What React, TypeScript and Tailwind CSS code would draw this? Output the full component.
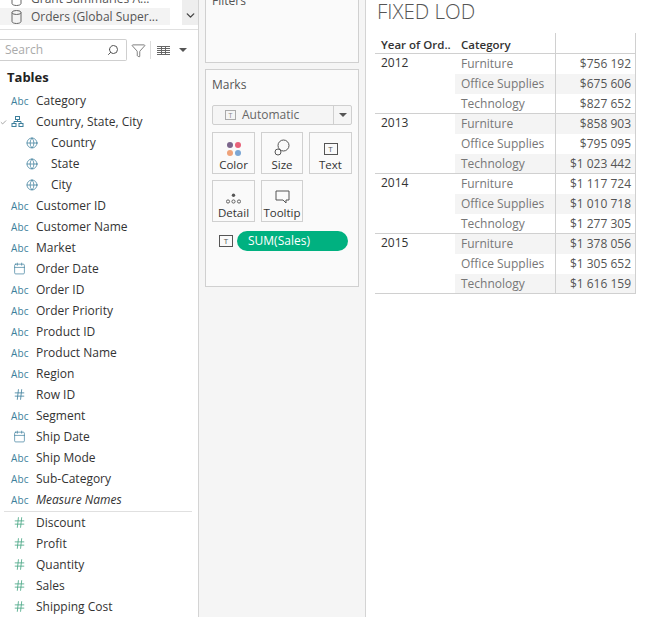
import { Filter, Search, ChevronDown, Calendar, Globe, Hash, Check } from "lucide-react";

const font = "font-['Open_Sans',sans-serif]";

type Kind = "abc" | "date" | "num" | "measure" | "geo" | "tree";

const dimensions: { name: string; kind: Kind; italic?: boolean }[] = [
  { name: "Customer ID", kind: "abc" },
  { name: "Customer Name", kind: "abc" },
  { name: "Market", kind: "abc" },
  { name: "Order Date", kind: "date" },
  { name: "Order ID", kind: "abc" },
  { name: "Order Priority", kind: "abc" },
  { name: "Product ID", kind: "abc" },
  { name: "Product Name", kind: "abc" },
  { name: "Region", kind: "abc" },
  { name: "Row ID", kind: "num" },
  { name: "Segment", kind: "abc" },
  { name: "Ship Date", kind: "date" },
  { name: "Ship Mode", kind: "abc" },
  { name: "Sub-Category", kind: "abc" },
  { name: "Measure Names", kind: "abc", italic: true },
];

const measures = ["Discount", "Profit", "Quantity", "Sales", "Shipping Cost"];

const years = [
  { year: "2012", values: ["$756 192", "$675 606", "$827 652"] },
  { year: "2013", values: ["$858 903", "$795 095", "$1 023 442"] },
  { year: "2014", values: ["$1 117 724", "$1 010 718", "$1 277 305"] },
  { year: "2015", values: ["$1 378 056", "$1 305 652", "$1 616 159"] },
];

const categories = ["Furniture", "Office Supplies", "Technology"];

function HierarchyIcon() {
  return (
    <svg width="13" height="13" viewBox="0 0 13 13" fill="none" stroke="#3d7f9c" strokeWidth="1">
      <rect x="4.5" y="1.5" width="4" height="3" />
      <rect x="1" y="8.5" width="4" height="3" />
      <rect x="8" y="8.5" width="4" height="3" />
      <path d="M6.5 4.5v2M3 8.5v-2h7v2" />
    </svg>
  );
}

function CylinderIcon() {
  return (
    <svg width="11" height="14" viewBox="0 0 11 14" fill="none" stroke="#666" strokeWidth="1" className="mr-[9px] shrink-0">
      <ellipse cx="5.5" cy="2.5" rx="4.5" ry="2" />
      <path d="M1 2.5v9c0 1.1 2 2 4.5 2s4.5-.9 4.5-2v-9" />
    </svg>
  );
}

function FieldIcon({ kind }: { kind: Kind }) {
  if (kind === "abc") return <span className="text-[10px] leading-none tracking-[0.2px] text-[#3d7f9c]">Abc</span>;
  if (kind === "date") return <Calendar size={13} color="#3d7f9c" strokeWidth={1.3} className="ml-[2px]" />;
  if (kind === "num") return <Hash size={13} color="#3d7f9c" strokeWidth={1.5} className="ml-[2px]" />;
  if (kind === "measure") return <Hash size={13} color="#45a583" strokeWidth={1.5} className="ml-[2px]" />;
  if (kind === "geo") return <Globe size={12} color="#3d7f9c" strokeWidth={1.5} />;
  return <HierarchyIcon />;
}

function FieldRow({ name, kind, italic }: { name: string; kind: Kind; italic?: boolean }) {
  return (
    <div className="flex h-[21px] items-center pl-[11px]">
      <span className="flex w-[25px] shrink-0 items-center">
        <FieldIcon kind={kind} />
      </span>
      <span className={`text-[12px] text-[#333] ${italic ? "italic" : ""}`}>{name}</span>
    </div>
  );
}

function TIcon({ className }: { className?: string }) {
  return (
    <span className={`flex h-[12px] w-[14px] items-center justify-center border border-[#555] text-[8px] leading-none text-[#555] ${className ?? ""}`}>
      T
    </span>
  );
}

function MarkButton({ label, children }: { label: string; children: React.ReactNode }) {
  return (
    <div className="flex h-[42px] w-full flex-col items-center border border-[#d0d0d0]">
      <div className="flex h-[24px] items-end justify-center">{children}</div>
      <span className="mt-[1px] text-[11.5px] leading-[16px] text-[#333]">{label}</span>
    </div>
  );
}

export default function App() {
  return (
    <div className={`flex h-[617px] w-[649px] overflow-hidden bg-white ${font}`}>
      {/* data pane */}
      <div className="w-[199px] shrink-0 overflow-hidden border-r border-[#d4d4d4]">
        <div className="flex h-[30px] items-start border-b border-[#e0e0e0]">
          <div className="w-[170px]">
            <div className="-mt-[10px] flex h-[18px] items-center pl-[11px] text-[12px] text-[#555]">
              <CylinderIcon />
              Grant Summaries A...
            </div>
            <div className="flex h-[17px] items-center bg-[#f3f3f3] pl-[11px] text-[12px] text-[#555]">
              <CylinderIcon />
              Orders (Global Super...
            </div>
          </div>
          <div className="ml-[12px] flex h-[25px] w-[16px] items-end justify-center bg-[#eeeeee] pb-[3px]">
            <ChevronDown size={13} color="#444" strokeWidth={2.5} />
          </div>
        </div>
        <div className="mt-[9px] flex h-[22px] items-center">
          <div className="flex h-[22px] w-[127px] items-center justify-between rounded-r-[2px] border border-l-0 border-[#cfcfcf] pl-[5px] pr-[7px] text-[12px] text-[#aaa]">
            Search
            <Search size={12} color="#555" className="-scale-x-100" />
          </div>
          <Filter size={15} color="#555" strokeWidth={1.2} className="ml-[4px]" />
          <div className="ml-[4px] h-[18px] w-px bg-[#ddd]" />
          <svg width="13" height="9" viewBox="0 0 13 9" fill="none" stroke="#666" strokeWidth="1" className="ml-[6px]">
            <path d="M0 .5h13M0 2.5h13M0 4.5h13M0 6.5h13M0 8.5h13M4.5 0v9M8.5 0v9" />
          </svg>
          <span className="ml-[9px] h-0 w-0 border-x-[4px] border-t-[4px] border-x-transparent border-t-[#555]" />
        </div>
        <div className="mt-[7px] pl-[7px] text-[13px] font-bold leading-[18px] text-[#222]">Tables</div>
        <div className="mt-[4px]">
          <FieldRow name="Category" kind="abc" />
          <div className="relative">
            <Check size={7} color="#666" className="absolute left-0 top-[8px]" />
            <FieldRow name="Country, State, City" kind="tree" />
          </div>
          <div className="pl-[15px]">
            {["Country", "State", "City"].map((n) => (
              <FieldRow key={n} name={n} kind="geo" />
            ))}
          </div>
          {dimensions.map((f) => (
            <FieldRow key={f.name} name={f.name} kind={f.kind} italic={f.italic} />
          ))}
        </div>
        <div className="mx-[4px] mt-[1px] h-px w-[188px] bg-[#e0e0e0]" />
        {measures.map((n) => (
          <FieldRow key={n} name={n} kind="measure" />
        ))}
      </div>

      {/* shelves */}
      <div className="w-[167px] shrink-0 border-r border-[#d4d4d4] bg-[#f5f5f5] pl-[6px]">
        <div className="-mt-[8px] h-[71px] w-[154px] border border-[#d0d0d0] bg-[#fafafa] px-[6px] text-[12px] leading-[16px] text-[#555]">
          Filters
        </div>
        <div className="mt-[6px] h-[218px] w-[154px] border border-[#d0d0d0] bg-[#fafafa] px-[6px]">
          <div className="mt-[7px] text-[12px] leading-[16px] text-[#555]">Marks</div>
          <div className="mt-[12px] flex h-[20px] w-[140px] items-center rounded-[2px] border border-[#cfcfcf] bg-[#f5f5f5]">
            <div className="flex flex-1 items-center pl-[12px] text-[12px] text-[#666]">
              <TIcon className="mr-[6px] !h-[10px] !w-[11px] border-[#aaa] !text-[7px] text-[#888]" />
              Automatic
            </div>
            <div className="flex h-full w-[18px] items-center justify-center border-l border-[#cfcfcf]">
              <span className="h-0 w-0 border-x-[4px] border-t-[4px] border-x-transparent border-t-[#555]" />
            </div>
          </div>
          <div className="mt-[7px] grid grid-cols-[43px_42px_43px] gap-x-[6px] gap-y-[6px]">
            <MarkButton label="Color">
              <span className="grid grid-cols-2 gap-[2px]">
                <span className="h-[6px] w-[6px] rounded-full bg-[#7b668c]" />
                <span className="h-[6px] w-[6px] rounded-full bg-[#e8627a]" />
                <span className="h-[6px] w-[6px] rounded-full bg-[#eea27a]" />
                <span className="h-[6px] w-[6px] rounded-full bg-[#7ba6d4]" />
              </span>
            </MarkButton>
            <MarkButton label="Size">
              <svg width="16" height="17" viewBox="0 0 16 17" fill="none" stroke="#555" strokeWidth="1">
                <circle cx="9.5" cy="6.5" r="5.5" />
                <circle cx="4" cy="13" r="3" fill="#fafafa" />
              </svg>
            </MarkButton>
            <MarkButton label="Text">
              <TIcon className="mb-[1px]" />
            </MarkButton>
            <MarkButton label="Detail">
              <svg width="15" height="11" viewBox="0 0 15 11" fill="none" stroke="#555" strokeWidth="0.9">
                <circle cx="7.5" cy="2.2" r="1.7" fill="#555" stroke="none" />
                <circle cx="2" cy="8.5" r="1.6" />
                <circle cx="7.5" cy="8.5" r="1.6" />
                <circle cx="13" cy="8.5" r="1.6" />
              </svg>
            </MarkButton>
            <MarkButton label="Tooltip">
              <svg width="15" height="14" viewBox="0 0 15 14" fill="none" stroke="#555" strokeWidth="1">
                <path d="M1 1h13v9h-3v3l-3-3H1z" />
              </svg>
            </MarkButton>
          </div>
          <div className="mt-[9px] flex items-center pl-[7px]">
            <TIcon />
            <div className="ml-[4px] flex h-[20px] w-[111px] items-center rounded-full bg-[#00b180] pl-[11px] text-[12px] text-white">
              SUM(Sales)
            </div>
          </div>
        </div>
      </div>

      {/* view */}
      <div className="flex-1 pl-[9px]">
        <div className="h-[22px] pl-[2px] text-[20.5px] font-light leading-[22px] text-[#555]">FIXED LOD</div>
        <div className="mt-[11px] w-[261px]">
          <div className="flex h-[21px] border-b border-[#d0d0d0] text-[11.5px] font-semibold leading-[24px] text-[#333]">
            <div className="w-[80px] truncate pl-[6px]">Year of Ord..</div>
            <div className="w-[100px] pl-[6px]">Category</div>
            <div className="w-[81px] border-x border-[#d0d0d0]" />
          </div>
          {years.map((y, yi) => (
            <div key={y.year} className="flex border-b border-[#d0d0d0]">
              <div className="w-[80px] pl-[6px] text-[12px] font-medium leading-[18px] text-[#333]">{y.year}</div>
              <div className="flex-1">
                {categories.map((c, ci) => (
                  <div key={c} className={`flex items-center ${ci === 2 ? "h-[19px]" : "h-[20px]"} ${(yi + ci) % 2 === 1 ? "bg-[#f4f4f4]" : ""}`}>
                    <div className="w-[100px] pl-[6px] text-[12px] text-[#777]">{c}</div>
                    <div className="flex h-full w-[81px] items-center justify-end border-x border-[#d0d0d0] pr-[4px] text-[12px] text-[#555]">
                      {y.values[ci]}
                    </div>
                  </div>
                ))}
              </div>
            </div>
          ))}
        </div>
      </div>
    </div>
  );
}
